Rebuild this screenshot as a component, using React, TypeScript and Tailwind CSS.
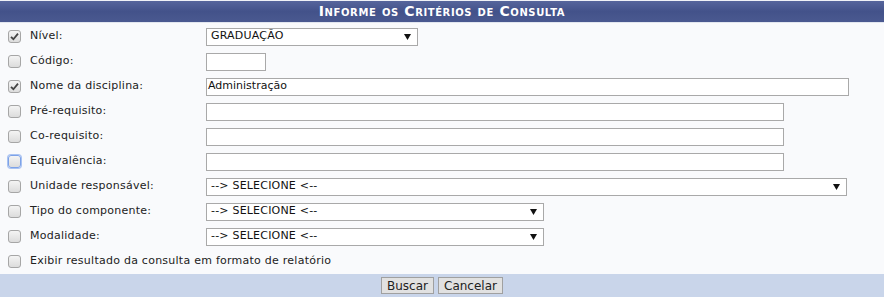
import React from "react";

type Row = {
  label: string;
  checked?: boolean;
  focus?: boolean;
  kind: "text" | "select";
  width: string;
  value?: string;
};

const ROWS: Row[] = [
  { label: "Nível:", checked: true, kind: "select", width: "w-[212px]", value: "GRADUAÇÃO" },
  { label: "Código:", kind: "text", width: "w-[60px]" },
  { label: "Nome da disciplina:", checked: true, kind: "text", width: "w-[643px]", value: "Administração" },
  { label: "Pré-requisito:", kind: "text", width: "w-[578px]" },
  { label: "Co-requisito:", kind: "text", width: "w-[578px]" },
  { label: "Equivalência:", focus: true, kind: "text", width: "w-[578px]" },
  { label: "Unidade responsável:", kind: "select", width: "w-[641px]", value: "--> SELECIONE <--" },
  { label: "Tipo do componente:", kind: "select", width: "w-[338px]", value: "--> SELECIONE <--" },
  { label: "Modalidade:", kind: "select", width: "w-[338px]", value: "--> SELECIONE <--" },
];

function Checkbox({ checked, focus }: { checked?: boolean; focus?: boolean }) {
  return (
    <div
      className={`flex h-[13px] w-[13px] items-center justify-center rounded-[3px] border bg-gradient-to-b from-[#f4f4f4] to-[#dcdcdc] ${
        focus ? "border-[#7da2e8] shadow-[0_0_0_1px_#a9c3f2]" : "border-[#a6a6a6]"
      }`}
    >
      {checked && (
        <svg width="9" height="9" viewBox="0 0 9 9">
          <path d="M1 4.8 L3.4 7.2 L8 1.6" fill="none" stroke="#444" strokeWidth="1.8" />
        </svg>
      )}
    </div>
  );
}

function Field({ row }: { row: Row }) {
  if (row.kind === "select") {
    return (
      <div
        className={`flex h-[18px] ${row.width} items-center justify-between border border-[#a9a9a9] bg-white pl-[4px] pr-[6px] text-[11px] tracking-[0.2px] text-[#111]`}
      >
        <span>{row.value}</span>
        <svg width="7" height="6" viewBox="0 0 7 6">
          <path d="M0 0 H7 L3.5 6 Z" fill="#111" />
        </svg>
      </div>
    );
  }
  return (
    <div
      className={`flex h-[18px] ${row.width} items-center border border-[#a9a9a9] bg-white pl-[1px] text-[11px] text-[#111]`}
    >
      {row.value}
    </div>
  );
}

export default function App() {
  return (
    <div className="h-[297px] w-[884px] bg-white font-['DejaVu_Sans',Verdana,sans-serif]">
      <div className="border-t border-[#f0f2f7] bg-[#f9fafc]">
        {/* Header */}
        <div className="flex h-[22px] items-center justify-center border-b border-[#e2e6ef] bg-gradient-to-b from-[#56659c] via-[#43528a] to-[#4a5990] text-[14px] font-bold tracking-[0.6px] text-white [font-variant:small-caps]">
          Informe os Critérios de Consulta
        </div>

        {/* Rows */}
        <div className="flex flex-col pt-[1px]">
          {ROWS.map((row) => (
            <div key={row.label} className="flex h-[25px] items-center">
              <div className="flex w-[30px] pl-[8px]">
                <Checkbox checked={row.checked} focus={row.focus} />
              </div>
              <div className="w-[176px] text-[11px] tracking-[0.25px] text-[#222]">{row.label}</div>
              <Field row={row} />
            </div>
          ))}
          <div className="flex h-[25px] items-center">
            <div className="flex w-[30px] pl-[8px]">
              <Checkbox />
            </div>
            <div className="text-[11px] tracking-[0.25px] text-[#222]">
              Exibir resultado da consulta em formato de relatório
            </div>
          </div>
        </div>

        {/* Footer */}
        <div className="flex h-[23px] items-center justify-center gap-[4px] bg-[#c9d5ea]">
          <button className="h-[17px] border border-[#a0a0a0] bg-[#e1e1e1] px-[5px] text-[12px] leading-none text-[#222]">
            Buscar
          </button>
          <button className="h-[17px] border border-[#a0a0a0] bg-[#e1e1e1] px-[5px] text-[12px] leading-none text-[#222]">
            Cancelar
          </button>
        </div>
      </div>
    </div>
  );
}
